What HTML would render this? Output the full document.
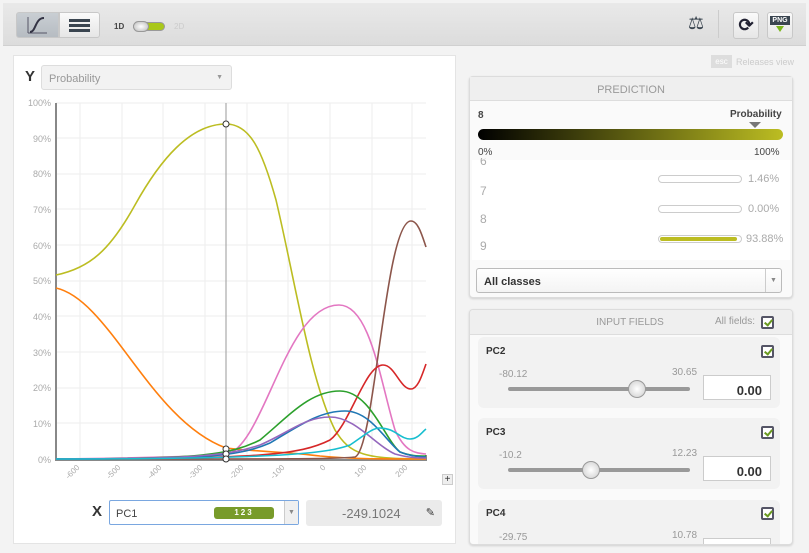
<!DOCTYPE html>
<html><head><meta charset="utf-8"><style>
*{box-sizing:border-box;margin:0;padding:0}
body{width:809px;height:553px;background:#f3f3f3;font-family:"Liberation Sans",sans-serif;position:relative;overflow:hidden}
.abs{position:absolute}
.top{left:3px;top:3px;width:803px;height:43px;background:linear-gradient(#e9e9e9,#dcdcdc);border-bottom:1px solid #d0d0d0}
.btn{border:1px solid #c8c8c8;border-radius:3px;background:linear-gradient(#fafafa,#e6e6e6)}
.panel{background:#fff;border:1px solid #e4e4e4}
.box{background:#fafafa;border:1px solid #dcdcdc;border-radius:4px;box-shadow:0 1px 2px rgba(0,0,0,.15)}
.ttl{font-size:11px;color:#999;text-align:center}
.sm{font-size:10px;color:#999}
.track{height:4px;background:#999;border-radius:2px}
.knob{width:18px;height:18px;border-radius:50%;background:radial-gradient(#fff,#ccc);border:1px solid #999}
.chk{width:13px;height:13px;border:2px solid #556;border-radius:2px;background:#fff}
.chk:after{content:"";position:absolute;left:3px;top:0px;width:3px;height:6px;border:solid #6a9a1f;border-width:0 2px 2px 0;transform:rotate(40deg)}
.inp{background:#fff;border:1px solid #ccc;font-weight:bold;font-size:13px;text-align:right;padding:7px 8px 0 0;color:#333}
</style></head><body>
<div class="abs top"></div>
<div class="abs btn" style="left:16px;top:12px;width:43px;height:26px;background:linear-gradient(#c9ced3,#b6bcc2);border-radius:3px 0 0 3px"></div>
<svg class="abs" style="left:16px;top:12px" width="43" height="26"><path d="M12,21 V5 M12,21 H31" stroke="#556" stroke-width="1" fill="none"/><path d="M14,20 C20,20 19,6 28,6" stroke="#334" stroke-width="2" fill="none"/></svg>
<div class="abs btn" style="left:59px;top:12px;width:41px;height:26px;border-radius:0 3px 3px 0"></div>
<div class="abs" style="left:69px;top:19px;width:21px;height:3px;background:#3a4550;box-shadow:0 5px 0 #3a4550,0 10px 0 #3a4550"></div>
<div class="abs" style="left:114px;top:22px;font-size:8px;font-weight:bold;color:#444">1D</div>
<div class="abs" style="left:133px;top:22px;width:32px;height:9px;border-radius:5px;background:#a9c81a;border:1px solid #999"></div>
<div class="abs" style="left:133px;top:21px;width:16px;height:11px;border-radius:6px;background:radial-gradient(#fff,#bbb);border:1px solid #999"></div>
<div class="abs" style="left:174px;top:22px;font-size:8px;color:#ccc">2D</div>
<div class="abs" style="left:688px;top:13px;font-size:18px;color:#3a4550">⚖</div>
<div class="abs" style="left:718px;top:10px;width:1px;height:28px;background:#ccc"></div>
<div class="abs btn" style="left:733px;top:12px;width:26px;height:27px;text-align:center;font-size:18px;font-weight:bold;color:#223;line-height:25px">⟳</div>
<div class="abs btn" style="left:767px;top:12px;width:26px;height:27px"></div>
<div class="abs" style="left:770px;top:16px;width:20px;height:9px;background:#3a4550;color:#fff;font-size:7px;font-weight:bold;text-align:center;line-height:9px">PNG</div>
<div class="abs" style="left:776px;top:26px;width:0;height:0;border:4px solid transparent;border-top:6px solid #7ab51d"></div>

<div class="abs panel" style="left:13px;top:55px;width:443px;height:489px"></div>
<div class="abs" style="left:25px;top:68px;font-size:15px;font-weight:bold;color:#333">Y</div>
<div class="abs" style="left:41px;top:65px;width:191px;height:25px;border:1px solid #ddd;border-radius:3px;background:#f2f2f2;font-size:11px;color:#999;padding:7px 0 0 7px">Probability<span style="position:absolute;right:8px;top:8px;font-size:7px">▼</span></div>

<svg class="abs" style="left:0;top:0" width="460" height="500" font-family="Liberation Sans" font-size="9" fill="#aaa">
<g stroke="#eee" stroke-width="1">
<path d="M56,138H426M56,174H426M56,209H426M56,245H426M56,281H426M56,316H426M56,352H426M56,388H426M56,423H426M56,103H426"/>
<path d="M80,103V459M122,103V459M163,103V459M205,103V459M247,103V459M288,103V459M330,103V459M372,103V459M412,103V459"/>
</g>
<g text-anchor="end">
<text x="51" y="106">100%</text><text x="51" y="142">90%</text><text x="51" y="177">80%</text><text x="51" y="213">70%</text><text x="51" y="249">60%</text><text x="51" y="284">50%</text><text x="51" y="320">40%</text><text x="51" y="356">30%</text><text x="51" y="391">20%</text><text x="51" y="427">10%</text><text x="51" y="463">0%</text>
</g>
<g text-anchor="end" font-size="8">
<text transform="translate(80,468) rotate(-45)">-600</text><text transform="translate(121,468) rotate(-45)">-500</text><text transform="translate(162,468) rotate(-45)">-400</text><text transform="translate(203,468) rotate(-45)">-300</text><text transform="translate(244,468) rotate(-45)">-200</text><text transform="translate(285,468) rotate(-45)">-100</text><text transform="translate(326,468) rotate(-45)">0</text><text transform="translate(367,468) rotate(-45)">100</text><text transform="translate(408,468) rotate(-45)">200</text>
</g>
<path d="M56,103V460H426V455" stroke="#888" stroke-width="2" fill="none"/>
<path d="M226,103V459" stroke="#999" stroke-width="1"/>
<g fill="none" stroke-width="1.6">
<path d="M56,275 C90,268 110,250 135,205 C160,160 190,124 226,124 C250,124 262,150 276,200 C295,280 310,380 335,430 C350,455 365,459 426,459" stroke="#bcbd22"/>
<path d="M56,288 C110,300 150,420 226,448 C260,452 290,452 320,456 C350,459 380,459 426,459" stroke="#ff7f0e"/>
<path d="M56,459 C150,458 200,456 226,455 C265,445 285,305 339,305 C370,305 380,380 395,430 C405,452 415,453 426,454" stroke="#e377c2"/>
<path d="M56,459 C300,459 340,459 355,457 C375,450 385,221 411,221 C418,221 422,235 426,247" stroke="#8c564b"/>
<path d="M56,459 C260,459 300,455 330,440 C350,425 365,365 383,365 C395,365 400,389 411,389 C418,389 422,375 426,364" stroke="#d62728"/>
<path d="M56,459 C200,459 230,455 260,440 C290,415 310,391 340,391 C370,391 385,440 400,452 C410,456 418,456 426,456" stroke="#2ca02c"/>
<path d="M56,459 C210,459 240,456 270,443 C300,425 320,411 345,411 C370,411 385,440 400,452 C410,456 418,457 426,457" stroke="#1f77b4"/>
<path d="M56,459 C200,459 230,455 260,445 C290,432 305,417 330,417 C355,417 375,445 395,454 C410,458 418,458 426,458" stroke="#9467bd"/>
<path d="M56,459 C300,459 330,452 350,445 C365,435 372,428 380,428 C395,428 400,439 410,439 C418,439 422,432 426,429" stroke="#17becf"/>
</g>
<g fill="#fff" stroke="#333" stroke-width="1"><circle cx="226" cy="124" r="3"/><circle cx="226" cy="449" r="3"/><circle cx="226" cy="454" r="3"/><circle cx="226" cy="459" r="3"/></g>
</svg>
<div class="abs" style="left:442px;top:474px;width:11px;height:11px;border:1px solid #ccc;background:#eee;font-size:10px;text-align:center;line-height:9px;color:#333">+</div>
<div class="abs" style="left:92px;top:503px;font-size:15px;font-weight:bold;color:#333">X</div>
<div class="abs" style="left:109px;top:500px;width:190px;height:25px;border:1px solid #7aa7e0;border-radius:2px;background:#fff;font-size:11px;color:#444;padding:7px 0 0 6px">PC1</div>
<div class="abs" style="left:214px;top:507px;width:60px;height:12px;background:#789b2a;border-radius:3px;color:#fff;font-size:8px;font-weight:bold;text-align:center;line-height:12px;letter-spacing:2px">123</div>
<div class="abs" style="left:284px;top:501px;width:14px;height:23px;border-left:1px solid #ccc;background:#f0f0f0;font-size:7px;color:#888;text-align:center;line-height:23px">▼</div>
<div class="abs" style="left:306px;top:500px;width:136px;height:26px;background:#ebebeb;border-radius:3px;font-size:13px;color:#777;padding:6px 0 0 36px">-249.1024<span style="position:absolute;right:7px;top:6px;font-size:11px;color:#333">✎</span></div>

<div class="abs" style="left:711px;top:55px;width:21px;height:13px;background:#ddd;color:#fff;font-size:8px;text-align:center;line-height:13px">esc</div>
<div class="abs sm" style="left:736px;top:57px;font-size:9px;color:#ccc">Releases view</div>

<div class="abs box" style="left:469px;top:76px;width:324px;height:222px"></div>
<div class="abs" style="left:470px;top:77px;width:322px;height:24px;background:#efefef;border-bottom:1px solid #ddd"></div>
<div class="abs ttl" style="left:470px;top:84px;width:322px">PREDICTION</div>
<div class="abs" style="left:478px;top:110px;font-size:10px;font-weight:bold;color:#444">8</div>
<div class="abs" style="left:730px;top:109px;font-size:10px;font-weight:bold;color:#444">Probability</div>
<div class="abs" style="left:749px;top:122px;border:6px solid transparent;border-top:6px solid #777;border-bottom:0"></div>
<div class="abs" style="left:478px;top:129px;width:305px;height:11px;border-radius:6px;background:linear-gradient(90deg,#000,#bcbd22)"></div>
<div class="abs" style="left:478px;top:147px;font-size:10px;color:#444">0%</div>
<div class="abs" style="left:754px;top:147px;font-size:10px;color:#444">100%</div>
<div class="abs" style="left:472px;top:160px;width:318px;height:100px;background:#fff"></div>
<div class="abs" style="left:480px;top:158px;font-size:12px;color:#aaa;height:8px;overflow:hidden;line-height:6px">6</div>
<div class="abs" style="left:480px;top:184px;font-size:12px;color:#aaa">7</div>
<div class="abs" style="left:480px;top:212px;font-size:12px;color:#aaa">8</div>
<div class="abs" style="left:480px;top:239px;font-size:12px;color:#aaa">9</div>
<div class="abs" style="left:658px;top:175px;width:84px;height:8px;border:1px solid #ccc;border-radius:4px"></div>
<div class="abs" style="left:748px;top:173px;font-size:11px;color:#aaa">1.46%</div>
<div class="abs" style="left:658px;top:205px;width:84px;height:8px;border:1px solid #ccc;border-radius:4px"></div>
<div class="abs" style="left:748px;top:203px;font-size:11px;color:#aaa">0.00%</div>
<div class="abs" style="left:658px;top:235px;width:84px;height:8px;border:1px solid #ccc;border-radius:4px;padding:1px"><div style="width:77px;height:4px;background:#bcbd22;border-radius:2px"></div></div>
<div class="abs" style="left:746px;top:233px;font-size:11px;color:#aaa">93.88%</div>
<div class="abs" style="left:476px;top:268px;width:306px;height:25px;border:1px solid #bbb;border-radius:3px;background:linear-gradient(#fff,#f4f4f4);font-size:11px;font-weight:bold;color:#333;padding:7px 0 0 7px">All classes<span style="position:absolute;right:0;top:0;width:16px;height:23px;border-left:1px solid #ccc;font-size:7px;color:#888;text-align:center;line-height:23px;font-weight:normal">▼</span></div>

<div class="abs box" style="left:469px;top:309px;width:324px;height:236px;overflow:hidden">
 <div style="height:25px;background:#efefef;border-bottom:1px solid #ddd"></div>
</div>
<div class="abs ttl" style="left:560px;top:317px;width:140px;font-size:10px">INPUT FIELDS</div>
<div class="abs sm" style="left:715px;top:316px;font-size:10px;color:#999">All fields:</div>
<div class="abs chk" style="left:761px;top:316px"></div>

<div class="abs" style="left:478px;top:337px;width:302px;height:71px;background:#f2f2f2;border-radius:6px"></div>
<div class="abs" style="left:486px;top:346px;font-size:10px;font-weight:bold;color:#333">PC2</div>
<div class="abs chk" style="left:761px;top:345px"></div>
<div class="abs sm" style="left:499px;top:369px">-80.12</div>
<div class="abs sm" style="left:672px;top:367px">30.65</div>
<div class="abs track" style="left:508px;top:387px;width:182px"></div>
<div class="abs knob" style="left:628px;top:380px"></div>
<div class="abs inp" style="left:703px;top:375px;width:68px;height:25px">0.00</div>

<div class="abs" style="left:478px;top:418px;width:302px;height:71px;background:#f2f2f2;border-radius:6px"></div>
<div class="abs" style="left:486px;top:427px;font-size:10px;font-weight:bold;color:#333">PC3</div>
<div class="abs chk" style="left:761px;top:426px"></div>
<div class="abs sm" style="left:499px;top:450px">-10.2</div>
<div class="abs sm" style="left:672px;top:448px">12.23</div>
<div class="abs track" style="left:508px;top:468px;width:182px"></div>
<div class="abs knob" style="left:582px;top:461px"></div>
<div class="abs inp" style="left:703px;top:456px;width:68px;height:25px">0.00</div>

<div class="abs" style="left:478px;top:500px;width:302px;height:44px;background:#f2f2f2;border-radius:6px 6px 0 0"></div>
<div class="abs" style="left:486px;top:508px;font-size:10px;font-weight:bold;color:#333">PC4</div>
<div class="abs chk" style="left:761px;top:507px"></div>
<div class="abs sm" style="left:499px;top:532px">-29.75</div>
<div class="abs sm" style="left:672px;top:530px">10.78</div>
<div class="abs" style="left:703px;top:538px;width:68px;height:6px;background:#fff;border:1px solid #ccc;border-bottom:0"></div>
</body></html>
